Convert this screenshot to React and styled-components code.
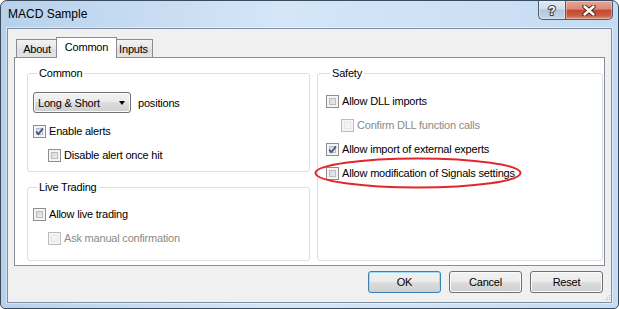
import React from 'react';
import styled, { createGlobalStyle, css } from 'styled-components';

const GlobalStyle = createGlobalStyle`
  html, body {
    margin: 0;
    padding: 0;
    background: #ffffff;
  }
  body {
    font-family: "Liberation Sans", Arial, sans-serif;
    font-size: 11px;
    color: #000;
  }
`;

function App() {
  return (
    <>
      <GlobalStyle />
      <Window>
        <TitleBar>
          <Title>MACD Sample</Title>
          <Caption>
            <HelpButton>
              <svg width="12" height="13" viewBox="0 0 12 13">
                <text x="6" y="11" textAnchor="middle" fontFamily="Liberation Sans, Arial, sans-serif"
                  fontWeight="bold" fontSize="12" fill="#fff" stroke="#3d4a5a" strokeWidth="2.2"
                  paintOrder="stroke">?</text>
              </svg>
            </HelpButton>
            <CloseButton>
              <svg width="14" height="11" viewBox="0 0 14 11">
                <path d="M2.5 1.5 L11.5 9.5 M11.5 1.5 L2.5 9.5" stroke="#4a2a24" strokeWidth="4.4" strokeLinecap="round" />
                <path d="M2.5 1.5 L11.5 9.5 M11.5 1.5 L2.5 9.5" stroke="#fff" strokeWidth="2.4" strokeLinecap="round" />
              </svg>
            </CloseButton>
          </Caption>
        </TitleBar>

        <Client>
          <TabStrip>
            <Tab w={42}>About</Tab>
            <Tab w={57} active>Common</Tab>
            <Tab w={39}>Inputs</Tab>
          </TabStrip>

          <Panel>
            <LeftCol>
              <Group h={106} pl={5} pt={11}>
                <Legend>Common</Legend>
                <ComboRow>
                  <Combo>
                    <span>Long &amp; Short</span>
                    <Arrow />
                  </Combo>
                  <span>positions</span>
                </ComboRow>
                <CheckRow style={{ marginTop: 6 }}>
                  <Box checked><Tick /></Box>
                  <Label>Enable alerts</Label>
                </CheckRow>
                <CheckRow indent>
                  <Box />
                  <Label>Disable alert once hit</Label>
                </CheckRow>
              </Group>

              <Group grow pl={5} pt={7}>
                <Legend>Live Trading</Legend>
                <CheckRow>
                  <Box />
                  <Label>Allow live trading</Label>
                </CheckRow>
                <CheckRow indent>
                  <Box disabled />
                  <Label disabled>Ask manual confirmation</Label>
                </CheckRow>
              </Group>
            </LeftCol>

            <RightCol>
              <Group grow pl={8} pt={8}>
                <Legend>Safety</Legend>
                <CheckRow>
                  <Box />
                  <Label>Allow DLL imports</Label>
                </CheckRow>
                <CheckRow indent>
                  <Box disabled />
                  <Label disabled>Confirm DLL function calls</Label>
                </CheckRow>
                <CheckRow>
                  <Box checked><Tick /></Box>
                  <Label>Allow import of external experts</Label>
                </CheckRow>
                <CheckRow>
                  <Box />
                  <Label>Allow modification of Signals settings</Label>
                </CheckRow>
              </Group>
              <Highlight width="208" height="32" viewBox="0 0 208 32">
                <ellipse cx="104" cy="16" rx="102.5" ry="14.5" fill="none" stroke="#e3262b" strokeWidth="2" />
              </Highlight>
            </RightCol>
          </Panel>

          <ButtonRow>
            <Button primary>OK</Button>
            <Button>Cancel</Button>
            <Button>Reset</Button>
          </ButtonRow>

          <Grip width="7" height="7" viewBox="0 0 7 7">
            <rect x="5" y="1" width="1" height="1" fill="#b5b5b5" />
            <rect x="3" y="3" width="1" height="1" fill="#b5b5b5" />
            <rect x="5" y="3" width="1" height="1" fill="#b5b5b5" />
            <rect x="1" y="5" width="1" height="1" fill="#b5b5b5" />
            <rect x="3" y="5" width="1" height="1" fill="#b5b5b5" />
            <rect x="5" y="5" width="1" height="1" fill="#b5b5b5" />
          </Grip>
        </Client>
      </Window>
    </>
  );
}

export default App;

const Window = styled.div`
  width: 619px;
  height: 309px;
  box-sizing: border-box;
  border: 1px solid #3b4b5e;
  border-radius: 7px 7px 5px 5px;
  background: linear-gradient(to right, #b8d1eb 0%, #d4e6f8 45%, #cde1f5 75%, #c4dbf2 100%);
  display: flex;
  flex-direction: column;
  overflow: hidden;
`;

const TitleBar = styled.div`
  height: 27px;
  display: flex;
  justify-content: space-between;
  align-items: flex-start;
`;

const Title = styled.div`
  padding: 6px 0 0 7px;
  font-size: 12px;
  line-height: 15px;
  color: #000;
`;

const Caption = styled.div`
  display: flex;
  margin-right: 5px;
`;

const captionBase = css`
  height: 19px;
  box-sizing: border-box;
  border: 1px solid #4a5b70;
  border-top: none;
  display: flex;
  align-items: center;
  justify-content: center;
  box-shadow: inset 0 0 0 1px rgba(255, 255, 255, 0.35);
`;

const HelpButton = styled.div`
  ${captionBase};
  width: 27px;
  border-right: none;
  border-radius: 0 0 0 5px;
  background: linear-gradient(#dfe9f4 0%, #cfdceb 45%, #b4c7dc 50%, #c4d6e9 100%);
`;

const CloseButton = styled.div`
  ${captionBase};
  width: 48px;
  border-radius: 0 0 5px 0;
  background: linear-gradient(#e7a797 0%, #d98774 45%, #c4472e 52%, #cc5a40 80%, #de9277 100%);
`;

const Client = styled.div`
  position: relative;
  flex: 1;
  margin: 0 6px 5px 6px;
  border: 1px solid #7f8ea2;
  box-shadow: 0 0 0 1px rgba(255, 255, 255, 0.45);
  background: #f0f0f0;
  padding: 8px 6px 9px 6px;
  display: flex;
  flex-direction: column;
`;

const TabStrip = styled.div`
  height: 20px;
  display: flex;
  align-items: flex-end;
  padding-left: 2px;
`;

const Tab = styled.div`
  width: ${p => p.w}px;
  height: 18px;
  box-sizing: border-box;
  border: 1px solid #898c95;
  border-bottom: none;
  margin-left: -1px;
  display: flex;
  align-items: center;
  justify-content: center;
  letter-spacing: -0.2px;
  background: linear-gradient(#f2f2f2, #e6e6e6 50%, #dcdcdc 50%, #e4e4e4);
  &:first-child {
    margin-left: 0;
  }
  ${p => p.active && css`
    height: 21px;
    margin-bottom: -1px;
    margin-left: -2px;
    margin-right: -2px;
    width: ${p.w + 4}px;
    position: relative;
    z-index: 1;
    background: #ffffff;
    padding-bottom: 2px;
  `}
`;

const Panel = styled.div`
  height: 209px;
  box-sizing: border-box;
  border: 1px solid #898c95;
  background: #ffffff;
  padding: 8px 1px 4px 12px;
  display: grid;
  grid-template-columns: 283px 286px;
  column-gap: 7px;
`;

const LeftCol = styled.div`
  display: flex;
  flex-direction: column;
  gap: 8px;
`;

const RightCol = styled.div`
  position: relative;
  display: flex;
  flex-direction: column;
`;

const Group = styled.fieldset`
  margin: 0;
  min-width: 0;
  box-sizing: border-box;
  border: 1px solid #d5dfe5;
  border-radius: 3px;
  padding: ${p => p.pt}px 4px 0 ${p => p.pl}px;
  ${p => p.h && css`height: ${p.h}px;`}
  ${p => p.grow && css`flex: 1;`}
`;

const Legend = styled.legend`
  margin-left: 4px;
  padding: 0 2px;
  line-height: 15px;
  letter-spacing: -0.2px;
  color: #000;
`;

const ComboRow = styled.div`
  display: flex;
  align-items: center;
  gap: 7px;
  letter-spacing: -0.2px;
`;

const Combo = styled.div`
  width: 98px;
  height: 21px;
  box-sizing: border-box;
  border: 1px solid #707070;
  border-radius: 3px;
  background: linear-gradient(#f2f2f2 0%, #ebebeb 50%, #dddddd 50%, #cfcfcf 100%);
  box-shadow: inset 0 0 0 1px #fbfbfb;
  display: flex;
  align-items: center;
  justify-content: space-between;
  padding: 0 5px 0 4px;
`;

const Arrow = styled.span`
  width: 0;
  height: 0;
  border-left: 3.5px solid transparent;
  border-right: 3.5px solid transparent;
  border-top: 4px solid #000;
`;

const CheckRow = styled.div`
  height: 24px;
  display: flex;
  align-items: center;
  margin-left: ${p => (p.indent ? 15 : 0)}px;
`;

const Box = styled.span`
  width: 13px;
  height: 13px;
  box-sizing: border-box;
  flex: none;
  border: 1px solid ${p => (p.disabled ? '#bcbcbc' : '#8e8f8f')};
  background: ${p => (p.disabled
    ? '#f4f4f4'
    : 'linear-gradient(135deg, #c9cdd3 0%, #e2e4e7 55%, #f7f7f7 100%)')};
  box-shadow: inset 0 0 0 2px #f4f4f4, inset 0 0 0 3px ${p => (p.disabled ? '#e6e6e6' : '#b9bcc1')};
  display: flex;
  align-items: center;
  justify-content: center;
`;

const Tick = () => (
  <svg width="11" height="11" viewBox="0 0 11 11" style={{ display: 'block' }}>
    <path d="M2.2 5.6 L4.4 8.2 L9 2.4" fill="none" stroke="#44578e" strokeWidth="1.8" strokeLinejoin="round" />
  </svg>
);

const Label = styled.span`
  margin-left: 3px;
  letter-spacing: -0.2px;
  white-space: nowrap;
  color: ${p => (p.disabled ? '#8a8a8a' : '#000')};
`;

const Highlight = styled.svg`
  position: absolute;
  left: -3px;
  top: 91px;
`;

const ButtonRow = styled.div`
  margin-top: 5px;
  display: flex;
  justify-content: flex-end;
  gap: 8px;
  padding-right: 2px;
`;

const Button = styled.div`
  width: 73px;
  height: 22px;
  box-sizing: border-box;
  border: 1px solid ${p => (p.primary ? '#3c7fb1' : '#707070')};
  border-radius: 3px;
  background: linear-gradient(#f2f2f2 0%, #ebebeb 50%, #dddddd 50%, #cfcfcf 100%);
  box-shadow: inset 0 0 0 1px ${p => (p.primary ? '#9fdcf7' : '#fbfbfb')};
  display: flex;
  align-items: center;
  justify-content: center;
  letter-spacing: -0.2px;
`;

const Grip = styled.svg`
  position: absolute;
  right: 0;
  bottom: 1px;
`;
